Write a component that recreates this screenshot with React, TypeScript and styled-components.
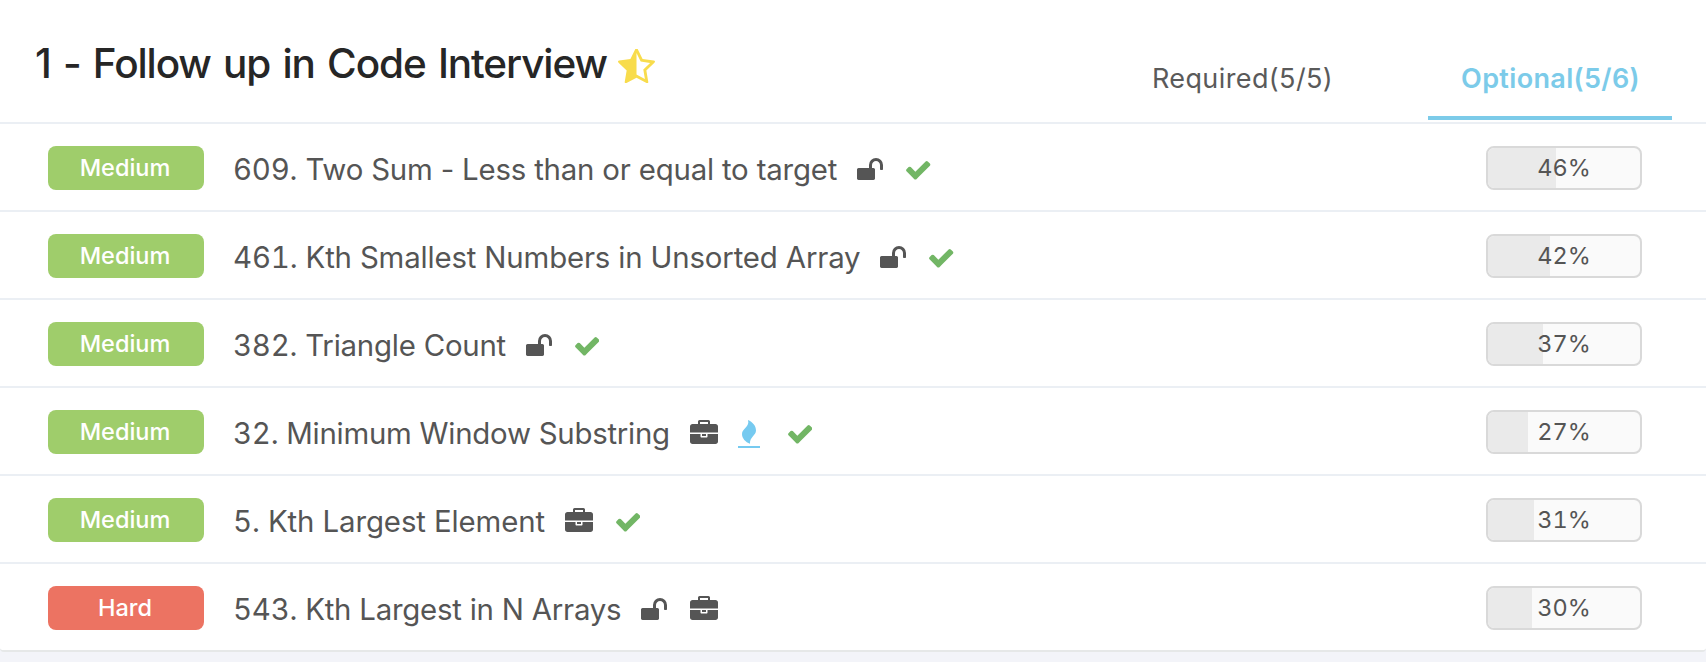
import React from 'react';
import styled, { createGlobalStyle } from 'styled-components';

const GlobalStyle = createGlobalStyle`
  *, *::before, *::after { box-sizing: border-box; }
  body { margin: 0; background: #f3f4f9; }
`;

const Panel = styled.section`
  width: 100%;
  height: 652px;
  background: #fff;
  border-bottom: 2px solid #e6e8e8;
  border-radius: 0 0 4px 4px;
  font-family: Inter, 'Liberation Sans', sans-serif;
  color: #555;
  overflow: hidden;
`;

const Header = styled.header`
  display: flex;
  justify-content: space-between;
  height: 124px;
  padding: 0 34px 0 35px;
  border-bottom: 2px solid #ebeff4;
`;

const Title = styled.h2`
  display: flex;
  align-items: flex-start;
  gap: 11px;
  margin: 0;
  padding-top: 39px;
  font-size: 40.5px;
  line-height: 49px;
  font-weight: 500;
  letter-spacing: -1.12px;
  word-spacing: 2.6px;
  white-space: nowrap;
  color: #262626;
`;

const StarWrap = styled.span`
  padding-top: 10px;
  color: #f8dc4c;
`;

const Tabs = styled.nav`
  display: flex;
  align-items: flex-start;
  gap: 64px;
`;

const Tab = styled.div<{ $active?: boolean }>`
  width: 244px;
  height: 120px;
  padding: 62px 0 0 1px;
  border-bottom: 4px solid ${(p) => (p.$active ? '#7ccbe9' : 'transparent')};
  text-align: center;
  font-size: 27px;
  line-height: 33px;
  letter-spacing: ${(p) => (p.$active ? 0.35 : 0.4)}px;
  font-weight: ${(p) => (p.$active ? 600 : 400)};
  color: ${(p) => (p.$active ? '#7ccbe9' : '#5a5a5a')};
`;

const Row = styled.div`
  display: flex;
  align-items: flex-start;
  height: 88px;
  padding: 22px 64px 0 48px;
  border-bottom: 2px solid #ebeff4;
  &:last-child { border-bottom: 0; }
`;

const Badge = styled.span<{ $level: string }>`
  flex: none;
  width: 156px;
  height: 44px;
  padding-right: 2px;
  border-radius: 8px;
  text-align: center;
  font-size: 23.5px;
  line-height: 44px;
  font-weight: 500;
  color: #fff;
  background: ${(p) => (p.$level === 'Hard' ? '#ec7362' : '#9fcd6b')};
`;

const Name = styled.a<{ $tracking: number }>`
  margin-left: 29px;
  padding-top: 6px;
  font-size: 29.4px;
  line-height: 36px;
  letter-spacing: ${(p) => p.$tracking}px;
  white-space: nowrap;
`;

const Num = styled.span`
  font-variant-numeric: tabular-nums;
`;

const Marks = styled.span`
  display: flex;
  align-items: flex-end;
  gap: 23px;
  height: 34px;
  margin-left: 20px;
`;

const Glyph = styled.svg`
  display: block;
  flex: none;
  fill: currentColor;
`;

const HotLink = styled.span`
  display: flex;
  justify-content: center;
  width: 22px;
  height: 28px;
  margin: 0 5px -4px -3px;
  border-bottom: 2px solid #76caf0;
  color: #76caf0;
`;

const Done = styled.span`
  color: #72b665;
`;

const Rate = styled.div`
  position: relative;
  flex: none;
  width: 156px;
  height: 44px;
  margin-left: auto;
  border: 2px solid #d9d9d9;
  border-radius: 8px;
  background: #fafafa;
  overflow: hidden;
`;

const Fill = styled.div`
  height: 100%;
  background: #eaeaea;
`;

const RateText = styled.span`
  position: absolute;
  inset: 0;
  text-align: center;
  font-size: 23.5px;
  line-height: 40px;
  letter-spacing: -0.1px;
  font-variant-numeric: tabular-nums;
`;

const Star = () => (
  <Glyph width="37" height="34.4" viewBox="64 89 1664 1530">
    <path d="M1250 957l257-250-356-52-66-10-30-60-159-322v963l59 31 318 168-60-355-12-66zm452-262l-363 354 86 500q5 33-6 51.5t-34 18.5q-17 0-40-12l-449-236-449 236q-23 12-40 12-23 0-34-18.5t-6-51.5l86-500-364-354q-32-32-23-59.5t54-34.5l502-73 225-455q20-41 49-41 28 0 49 41l225 455 502 73q45 7 54 34.5t-24 59.5z" />
  </Glyph>
);

const Unlock = () => (
  <Glyph width="26" height="22" viewBox="0 128 1664 1408">
    <path d="M1664 576v256q0 26-19 45t-45 19h-64q-26 0-45-19t-19-45v-256q0-106-75-181t-181-75-181 75-75 181v192h96q40 0 68 28t28 68v576q0 40-28 68t-68 28h-960q-40 0-68-28t-28-68v-576q0-40 28-68t68-28h672v-192q0-185 131.5-316.5t316.5-131.5 316.5 131.5 131.5 316.5z" />
  </Glyph>
);

const Briefcase = () => (
  <Glyph width="28" height="24" viewBox="0 0 1792 1536">
    <path d="M640 256h512v-128h-512v128zm1152 640v480q0 66-47 113t-113 47h-1472q-66 0-113-47t-47-113v-480h672v160q0 26 19 45t45 19h320q26 0 45-19t19-45v-160h672zm-768 0v128h-256v-128h256zm768-480v384h-1792v-384q0-66 47-113t113-47h352v-160q0-40 28-68t68-28h576q40 0 68 28t28 68v160h352q66 0 113 47t47 113z" />
  </Glyph>
);

const Check = () => (
  <Done>
    <Glyph width="24.4" height="18.6" viewBox="121 334 1550 1188">
      <path d="M1671 566q0 40-28 68l-724 724-136 136q-28 28-68 28t-68-28l-136-136-362-362q-28-28-28-68t28-68l136-136q28-28 68-28t68 28l294 295 656-657q28-28 68-28t68 28l136 136q28 28 28 68z" />
    </Glyph>
  </Done>
);

const Flame = () => (
  <HotLink>
    <Glyph width="14" height="24" viewBox="0 0 14 24">
      <path d="M6 0C10.500 2 14 5.500 14 10.500C14 15.500 7.500 17 8 23.800C3.500 22 0 18.500 0 14C0 8.500 8 7 6 0Z" />
    </Glyph>
  </HotLink>
);

const icons = { unlock: Unlock, briefcase: Briefcase, flame: Flame, check: Check };

type Problem = {
  level: string;
  id: number;
  name: string;
  tracking: number;
  marks: (keyof typeof icons)[];
  rate: number;
};

const problems: Problem[] = [
  { level: 'Medium', id: 609, name: 'Two Sum - Less than or equal to target', tracking: -0.19, marks: ['unlock', 'check'], rate: 46 },
  { level: 'Medium', id: 461, name: 'Kth Smallest Numbers in Unsorted Array', tracking: -0.16, marks: ['unlock', 'check'], rate: 42 },
  { level: 'Medium', id: 382, name: 'Triangle Count', tracking: -0.22, marks: ['unlock', 'check'], rate: 37 },
  { level: 'Medium', id: 32, name: 'Minimum Window Substring', tracking: -0.25, marks: ['briefcase', 'flame', 'check'], rate: 27 },
  { level: 'Medium', id: 5, name: 'Kth Largest Element', tracking: -0.1, marks: ['briefcase', 'check'], rate: 31 },
  { level: 'Hard', id: 543, name: 'Kth Largest in N Arrays', tracking: -0.23, marks: ['unlock', 'briefcase'], rate: 30 },
];

export default function App() {
  return (
    <>
      <GlobalStyle />
      <Panel>
        <Header>
          <Title>
            1 - Follow up in Code Interview
            <StarWrap><Star /></StarWrap>
          </Title>
          <Tabs>
            <Tab>Required(5/5)</Tab>
            <Tab $active>Optional(5/6)</Tab>
          </Tabs>
        </Header>
        {problems.map((p) => (
          <Row key={p.id}>
            <Badge $level={p.level}>{p.level}</Badge>
            <Name $tracking={p.tracking}><Num>{p.id}.</Num> {p.name}</Name>
            <Marks>
              {p.marks.map((m) => {
                const Icon = icons[m];
                return <Icon key={m} />;
              })}
            </Marks>
            <Rate>
              <Fill style={{ width: `calc(${p.rate}% - 1.5px)` }} />
              <RateText>{p.rate}%</RateText>
            </Rate>
          </Row>
        ))}
      </Panel>
    </>
  );
}
